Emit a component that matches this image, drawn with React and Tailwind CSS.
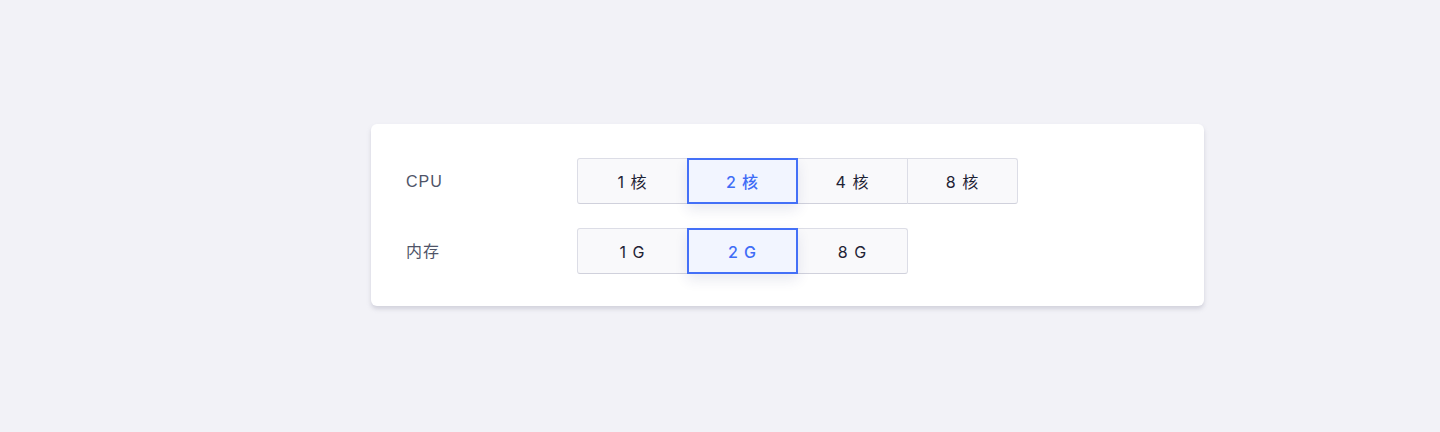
import { useState } from 'react';

const cpuOptions = ['1 核', '2 核', '4 核', '8 核'];
const memOptions = ['1 G', '2 G', '8 G'];

const Segment = ({ options, value, onChange }) => (
  <div className="flex">
    {options.map((opt, i) => {
      const active = opt === value;
      return (
        <button
          key={opt}
          type="button"
          onClick={() => onChange(opt)}
          className={
            'h-[46px] w-[111px] pt-[2px] font-[Inter,"Noto_Sans_CJK_SC",sans-serif] text-[16px] tracking-[1px] first:rounded-l-[3px] last:rounded-r-[3px] ' +
            (i > 0 ? '-ml-px ' : '') +
            (active
              ? 'relative z-10 border-2 border-[#4470f7] bg-[#f2f5ff] font-medium text-[#3f6cf6] shadow-[0_6px_12px_rgba(40,50,120,0.10)]'
              : 'border border-[#dcdde6] border-b-[#d0d1dc] bg-[#f9f9fb] text-[#1f2335]')
          }
        >
          {opt}
        </button>
      );
    })}
  </div>
);

export default function App() {
  const [cpu, setCpu] = useState('2 核');
  const [mem, setMem] = useState('2 G');

  return (
    <div
      className="h-[432px] w-full bg-[#f2f2f7] pl-[371px] pt-[124px]"
      style={{ fontFamily: '"Liberation Sans", "Noto Sans CJK SC", sans-serif' }}
    >
      <div className="h-[182px] w-[833px] rounded-[6px] bg-white pl-[35px] pt-[34px] shadow-[0_3px_4px_rgba(150,150,170,0.35)]">
        <div className="flex flex-col gap-6">
          <div className="flex items-center">
            <div className="w-[171px] pt-[2px] text-[16px] tracking-[1px] text-[#4f5468]">CPU</div>
            <Segment options={cpuOptions} value={cpu} onChange={setCpu} />
          </div>
          <div className="flex items-center">
            <div className="w-[171px] pt-[2px] text-[16px] tracking-[1px] text-[#4f5468]">内存</div>
            <Segment options={memOptions} value={mem} onChange={setMem} />
          </div>
        </div>
      </div>
    </div>
  );
}
